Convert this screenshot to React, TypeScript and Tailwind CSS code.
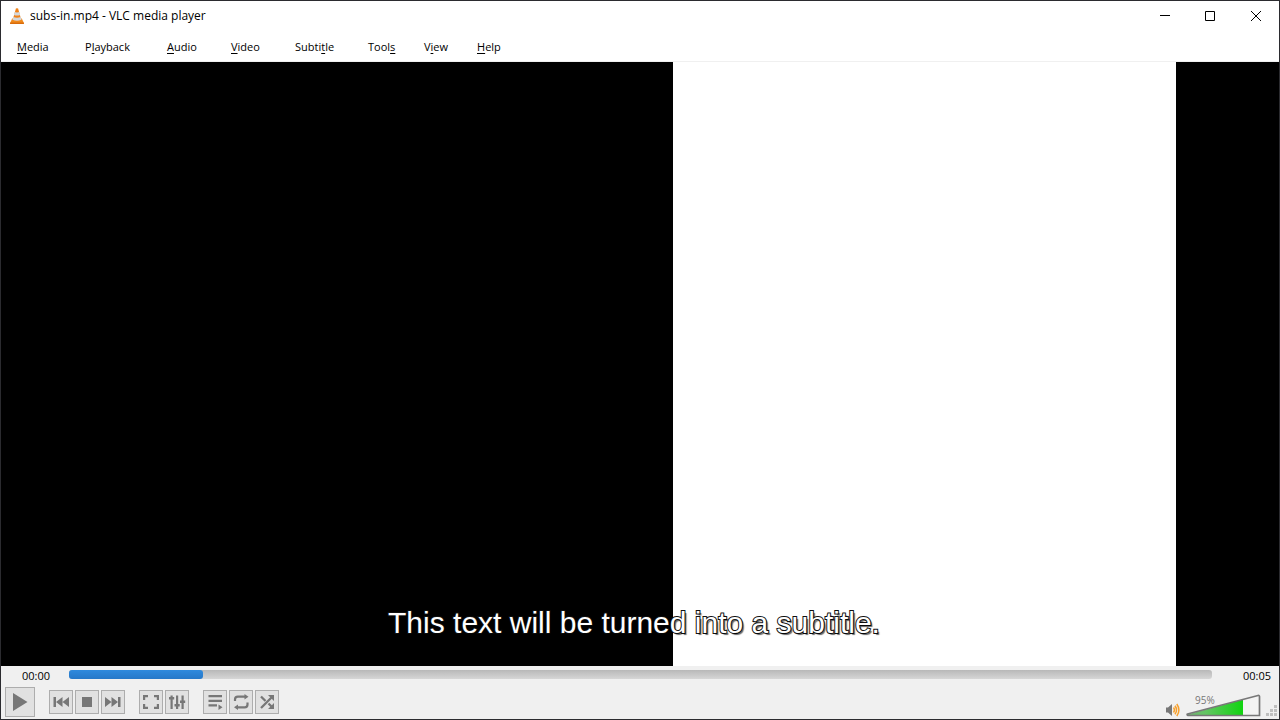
import React, { useState } from "react";

const menus = [
  { before: "", key: "M", after: "edia", width: "w-[68px]" },
  { before: "P", key: "l", after: "ayback", width: "w-[82px]" },
  { before: "", key: "A", after: "udio", width: "w-16" },
  { before: "", key: "V", after: "ideo", width: "w-16" },
  { before: "Subti", key: "t", after: "le", width: "w-[73px]" },
  { before: "Tool", key: "s", after: "", width: "w-14" },
  { before: "V", key: "i", after: "ew", width: "w-[53px]" },
  { before: "", key: "H", after: "elp", width: "w-14" },
];

const Cone = () => (
  <svg width="14" height="16" viewBox="0 0 14 16" aria-hidden="true">
    <path d="M2.2 10.5h9.6L14 15.2q0 .8-.8.8H.8Q0 16 0 15.2z" fill="#f08a1c" />
    <path d="M.3 14.5h13.4l.3 1q-.2.5-.8.5H.8q-.6 0-.8-.5z" fill="#d96c0c" />
    <path d="M5.9.6Q7 0 8.1.6L11.3 12q-4.3 2.4-8.6 0z" fill="#f08218" />
    <path d="M4.7 4.1q2.3.8 4.6 0l.8 2.9q-3.1 1.2-6.2 0z" fill="#d4d8dc" />
    <path d="M3.3 9.1q3.7 1.5 7.4 0l.8 2.7q-4.5 2-9 0z" fill="#d4d8dc" />
  </svg>
);

const Speaker = () => (
  <svg width="14" height="14" viewBox="0 0 14 14" aria-hidden="true">
    <path d="M0 4.5h2L6 1v12L2 9.5H0z" fill="#777" />
    <path
      d="M7.5 4.5q1.8 2.5 0 5M9 2.8q3 4.2 0 8.4M10.8 1q4.2 6 0 12"
      fill="none"
      stroke="#f7a02c"
      strokeWidth="1.5"
    />
  </svg>
);

const Grip = () => (
  <svg width="11" height="11" viewBox="0 0 11 11" fill="#bfbfbf" className="mb-px" aria-hidden="true">
    <path d="M8 0h3v3H8zM4 4h3v3H4zM8 4h3v3H8zM0 8h3v3H0zM4 8h3v3H4zM8 8h3v3H8z" />
  </svg>
);

type ToolProps = {
  label: string;
  large?: boolean;
  children: React.ReactNode;
};

const Tool = ({ label, large, children }: ToolProps) => (
  <button
    type="button"
    aria-label={label}
    className={`flex items-center justify-center border border-[#adadad] bg-[#e1e1e1] text-[#777] ${large ? "size-[30px]" : "size-6"}`}
  >
    {large ? (
      <svg width="28" height="28" viewBox="0 0 28 28" fill="currentColor" aria-hidden="true">
        {children}
      </svg>
    ) : (
      <svg width="22" height="22" viewBox="0 0 22 22" fill="currentColor" aria-hidden="true">
        {children}
      </svg>
    )}
  </button>
);

const TitleBar = () => (
  <header className="flex h-[30px] items-center bg-white">
    <div className="flex flex-1 items-center gap-1.5 pl-[9px]">
      <Cone />
      <h1 className="text-xs">subs-in.mp4 - VLC media player</h1>
    </div>
    <button type="button" aria-label="Minimize" className="flex h-full w-[46px] items-center justify-center">
      <svg width="12" height="10" viewBox="0 0 12 10" stroke="#000">
        <path d="M2 4.5h10" />
      </svg>
    </button>
    <button type="button" aria-label="Maximize" className="flex h-full w-[46px] items-center justify-center">
      <svg width="10" height="10" viewBox="0 0 10 10" stroke="#000" fill="none">
        <path d="M.5.5h9v9h-9z" />
      </svg>
    </button>
    <button type="button" aria-label="Close" className="flex h-full w-[46px] items-center justify-center">
      <svg width="10" height="10" viewBox="0 0 10 10" stroke="#000">
        <path d="M0 0l10 10M10 0L0 10" />
      </svg>
    </button>
  </header>
);

const MenuBar = () => (
  <nav className="flex h-[31px] items-center border-b border-[#f0f0f0] bg-white pt-0.5 pl-4">
    {menus.map(({ before, key, after, width }) => (
      <button key={before + key + after} type="button" className={`text-left ${width}`}>
        {before}
        <span className="underline underline-offset-2">{key}</span>
        {after}
      </button>
    ))}
  </nav>
);

const Video = () => (
  <main className="relative flex flex-1 bg-black">
    <div className="flex-[672]" />
    <div className="flex-[503] bg-white" />
    <div className="flex-[103]" />
    <p className="absolute inset-x-0 bottom-6 pr-3 text-center font-['Liberation_Sans',sans-serif] text-[30px] leading-[38px] text-white [-webkit-text-stroke:2px_#111] [paint-order:stroke_fill] [text-shadow:2px_2px_1px_#0009]">
      This text will be turned into a subtitle.
    </p>
  </main>
);

const SeekBar = () => {
  const [position, setPosition] = useState(11.7);

  return (
    <div className="flex h-5 items-center">
      <span className="w-[68px] pl-[21px]">00:00</span>
      <div className="relative mb-1 h-[9px] flex-1 rounded-[3px] bg-linear-to-b from-[#b8b8b8] to-[#d6d6d6]">
        <div
          className="h-full rounded-[3px] bg-linear-to-b from-[#2f8ade] to-[#2678c8]"
          style={{ width: `${position}%` }}
        />
        <input
          type="range"
          aria-label="Position"
          min="0"
          max="100"
          step="0.1"
          value={position}
          onChange={(e) => setPosition(Number(e.target.value))}
          className="absolute inset-0 size-full opacity-0"
        />
      </div>
      <span className="w-[67px] pr-2 text-right">00:05</span>
    </div>
  );
};

const Volume = () => {
  const [volume, setVolume] = useState(95);

  return (
    <div className="flex items-end gap-1.5">
      <button type="button" aria-label="Mute">
        <Speaker />
      </button>
      <div className="relative">
        <svg width="75" height="24" viewBox="0 0 75 24" className="block" aria-hidden="true">
          <defs>
            <linearGradient id="level">
              <stop offset="0" stopColor="#78b078" />
              <stop offset=".35" stopColor="#63c563" />
              <stop offset="1" stopColor="#10d410" />
            </linearGradient>
            <clipPath id="wedge">
              <path d="M1 21.5 72 2.5q1.5-.3 1.5 1V22.5H1.5z" />
            </clipPath>
          </defs>
          <path d="M1.5 21 72 2.5q1.5-.3 1.5 1V22.5H2q-1.5-.6-.5-1.5z" fill="#f3f3f3" />
          <rect width={(volume / 125) * 75} height="24" fill="url(#level)" clipPath="url(#wedge)" />
          <path
            d="M1.5 21 72 2.5q1.5-.3 1.5 1V22.5H2q-1.5-.6-.5-1.5z"
            fill="none"
            stroke="#777"
            strokeWidth="1.7"
          />
        </svg>
        <span className="absolute top-px left-[9px] text-[10px] leading-3 text-[#777]">{volume}%</span>
        <input
          type="range"
          aria-label="Volume"
          min="0"
          max="125"
          value={volume}
          onChange={(e) => setVolume(Number(e.target.value))}
          className="absolute inset-0 size-full opacity-0"
        />
      </div>
    </div>
  );
};

const Controls = () => (
  <footer className="bg-[#f0f0f0]">
    <SeekBar />
    <div className="flex items-end justify-between pt-px pb-0.5 pl-1">
      <div className="flex items-center gap-3.5">
        <Tool label="Play" large>
          <path d="M7 5v18L21.5 14z" />
        </Tool>
        <div className="flex gap-0.5">
          <Tool label="Previous">
            <path d="M3.500 6H6v10H3.500zM12.500 6v10L6 11zM19 6v10l-6.500-5z" />
          </Tool>
          <Tool label="Stop">
            <path d="M6 6h10v10H6z" />
          </Tool>
          <Tool label="Next">
            <path d="M16 6h2.500v10H16zM9.500 6v10l6.500-5zM3 6v10l6.500-5z" />
          </Tool>
        </div>
        <div className="flex gap-0.5">
          <Tool label="Fullscreen">
            <path d="M3 4h5v2.200H5.200V9H3zM14 4h5v5h-2.200V6.200H14zM3 13h2.200v2.800H8V18H3zM16.800 13H19v5h-5v-2.200h2.800z" />
          </Tool>
          <Tool label="Extended settings">
            <path d="M4.500 4.500h2.200V18H4.500zM10 4.500h2.200V18H10zM15.500 4.500h2.200V18h-2.200zM3 6h5.200v2.500H3zM8.500 13h5.200v2.500H8.500zM14 9.500h5.200V12H14z" />
          </Tool>
        </div>
        <div className="flex gap-0.5">
          <Tool label="Playlist">
            <path d="M4.500 4H18v2.300H4.500zM4.500 8.700H18V11H4.500zM4.500 13.300H13v2.300H4.500zM14.500 13.500V19l4-2.700z" />
          </Tool>
          <Tool label="Loop">
            <path
              d="M5 10V8.500q0-2.800 2.800-2.800H15M17.500 11.500v2q0 2.800-2.800 2.800H7.500"
              fill="none"
              stroke="currentColor"
              strokeWidth="2.2"
            />
            <path d="M14.500 3v5.500l4-2.800zM8 13.500V19l-4-2.700z" />
          </Tool>
          <Tool label="Random">
            <path
              d="M5 17 16 6M5 5.500l4.500 4.500M12.500 12.500l3.500 3.500"
              fill="none"
              stroke="currentColor"
              strokeWidth="2.3"
            />
            <path d="M12 4h6v6zM18 12v6h-6z" />
          </Tool>
        </div>
      </div>
      <div className="flex items-end gap-[5px] pr-0.5">
        <Volume />
        <Grip />
      </div>
    </div>
  </footer>
);

const App = () => {
  return (
    <div className="flex min-h-screen flex-col border border-[#2b2b2f] font-['Open_Sans','Noto_Sans',sans-serif] text-[11px] leading-4 text-black">
      <TitleBar />
      <MenuBar />
      <Video />
      <Controls />
    </div>
  );
};

export default App;
